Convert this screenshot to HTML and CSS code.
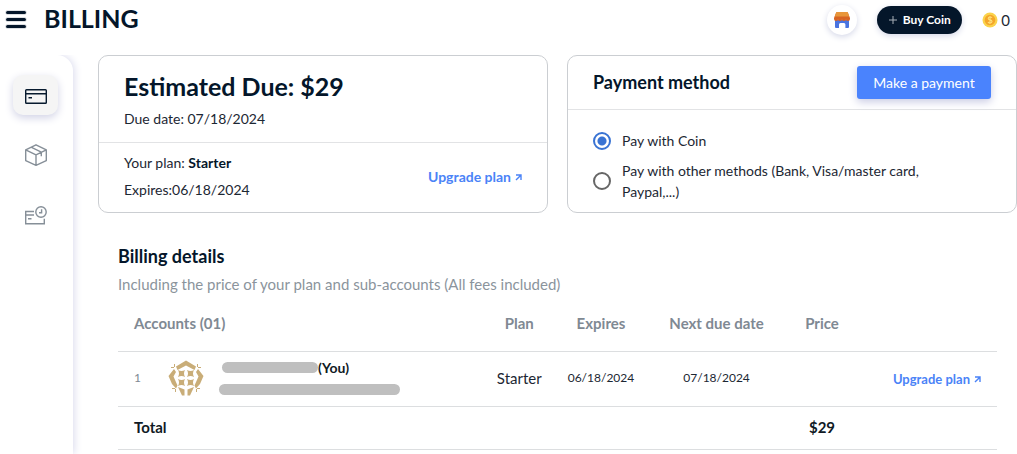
FILE: index.html
```html
<!DOCTYPE html>
<html lang="en">
<head>
<meta charset="utf-8">
<meta name="viewport" content="width=device-width, initial-scale=1">
<title>Billing</title>
<link rel="stylesheet" href="styles.css">
</head>
<body>
<header class="topbar">
  <button class="menu-btn" aria-label="Menu"><span></span><span></span><span></span></button>
  <h1 class="page-title">BILLING</h1>
  <div class="top-actions">
    <button class="shop-btn" aria-label="Shop">
      <svg width="16" height="17" viewBox="0 0 16 17">
        <path d="M1 8h14v7q0 1-1 1h-2.600v-3.500q0-1.500-1.400-1.500H6.500Q5 11 5 12.500V16H2q-1 0-1-1z" fill="#4a74e0"/>
        <path d="M2 1q.2-1 1.200-1h9.600q1 0 1.200 1l2 5v1q0 2-2 2t-2-1.500Q12 9 10 9T8 7.500Q8 9 6 9T4 7.500Q4 9 2 9T0 7V6z" fill="#d76424"/>
        <path d="M2 1q.2-1 1.200-1h9.600q1 0 1.200 1l1.300 3.500H.700z" fill="#e8963a"/>
      </svg>
    </button>
    <button class="buy-btn"><svg width="8" height="8" viewBox="0 0 8 8"><path d="M4 0v8M0 4h8" stroke="#a9b0b8"/></svg>Buy Coin</button>
    <div class="coins">
      <svg width="16" height="16" viewBox="0 0 16 16"><circle cx="8" cy="8" r="7.500" fill="#fbd34b"/><circle cx="8" cy="8" r="5.300" fill="#f4a62a"/><path d="M10 5.800Q9.500 5 8 5 6.200 5 6.200 6.400 6.200 7.600 8 7.900 10 8.300 10 9.600 10 11 8 11 6.400 11 6 10M8 3.900v8.200" fill="none" stroke="#ffe07a" stroke-width="1.100"/></svg>
      <span>0</span>
    </div>
  </div>
</header>
<div class="layout">
  <nav class="sidebar">
    <a href="#" class="nav-item active" aria-label="Payment">
      <svg width="22" height="15" viewBox="0 0 22 15" fill="none" stroke="#071a2e" stroke-width="1.400"><rect x=".7" y=".7" width="20.600" height="13.600" rx=".8"/><path d="M1 4.700h20M3.500 8.700h3.500"/></svg>
    </a>
    <a href="#" class="nav-item" aria-label="Products">
      <svg width="22" height="22" viewBox="0 0 22 22" fill="none" stroke="#868f98" stroke-width="1.400" stroke-linejoin="round"><path d="M11 .800 21.300 5.800v10.800L11 21.300.700 16.600V5.800zM.700 5.800 11 10.800 21.300 5.800M11 10.800v10.500M6 3.200l10.300 5v4"/></svg>
    </a>
    <a href="#" class="nav-item" aria-label="Payment history">
      <svg width="22" height="19" viewBox="0 0 22 19" fill="none" stroke="#868f98" stroke-width="1.400"><path d="M9 5.500H.700v12.300h18.600v-5M1 9h8M3 12.800h3.500"/><circle cx="16" cy="6" r="5.200"/><path d="M16.600 3.300v3.500H14"/></svg>
    </a>
  </nav>
  <main class="content">
    <div class="cards">
      <section class="card">
        <div class="due">
          <h2>Estimated Due: $29</h2>
          <p>Due date: 07/18/2024</p>
        </div>
        <div class="plan">
          <div>
            <p>Your plan: <strong>Starter</strong></p>
            <p>Expires:06/18/2024</p>
          </div>
          <a href="#" class="upgrade">Upgrade plan<svg width="7" height="7" viewBox="0 0 7 7"><path d="M1 6 5.800 1.200M1 1h5v5" fill="none" stroke="currentColor" stroke-width="1.400"/></svg></a>
        </div>
      </section>
      <section class="card">
        <div class="method-head">
          <h3>Payment method</h3>
          <button class="pay-btn">Make a payment</button>
        </div>
        <div class="methods">
          <label><input type="radio" name="method" checked><span>Pay with Coin</span></label>
          <label><input type="radio" name="method"><span>Pay with other methods (Bank, Visa/master card, Paypal,...)</span></label>
        </div>
      </section>
    </div>
    <section class="details">
      <h3>Billing details</h3>
      <p class="sub">Including the price of your plan and sub-accounts (All fees included)</p>
      <table class="bill">
        <colgroup><col class="c-account"><col class="c-plan"><col class="c-plan"><col class="c-next"><col class="c-price"><col></colgroup>
        <thead><tr><th class="first">Accounts (01)</th><th>Plan</th><th>Expires</th><th>Next due date</th><th>Price</th><th></th></tr></thead>
        <tbody>
          <tr class="account-row">
            <td class="first"><div class="account">
              <span class="num">1</span>
              <svg class="avatar" width="36" height="36" viewBox="0 0 36 36" fill="#c9ad78">
                <path d="M18 .500 28 6.500 26.500 10 18 5.500 9.500 10 8 6.500z"/>
                <path d="M6 9 8 12 5.500 16.500 9.500 25.500 8 28.500 4 24 .500 16z"/>
                <path d="M30 9 28 12 30.500 16.500 26.500 25.500 28 28.500 32 24 35.500 16z"/>
                <path d="M10 27 16.500 29.500V35.500H14z"/><path d="M26 27 19.500 29.500V35.500H22z"/>
                <path d="M3 7h3v1H3zM6 4h1v3H6zM30 7h3v1h-3zM29 4h1v3h-1zM4 28h3v1H4zM7 29h1v3H7zM29 28h3v1h-3zM28 29h1v3h-1z"/>
                <path d="M10 10q3.500 2 7 0-2 3.500 0 7-3.500-2-7 0 2-3.500 0-7zM19 10q3.500 2 7 0-2 3.500 0 7-3.500-2-7 0 2-3.500 0-7zM10 19q3.500 2 7 0-2 3.500 0 7-3.500-2-7 0 2-3.500 0-7zM19 19q3.500 2 7 0-2 3.500 0 7-3.500-2-7 0 2-3.500 0-7z"/>
              </svg>
              <div class="who">
                <div class="name"><span class="mask"></span>(You)</div>
                <div class="mask mask-mail"></div>
              </div>
            </div></td>
            <td>Starter</td><td class="date">06/18/2024</td><td class="date">07/18/2024</td><td></td>
            <td class="action"><a href="#" class="upgrade small">Upgrade plan<svg width="7" height="7" viewBox="0 0 7 7"><path d="M1 6 5.800 1.200M1 1h5v5" fill="none" stroke="currentColor" stroke-width="1.400"/></svg></a></td>
          </tr>
          <tr class="total"><td class="first">Total</td><td></td><td></td><td></td><td>$29</td><td></td></tr>
        </tbody>
      </table>
    </section>
  </main>
</div>
</body>
</html>
```
FILE: styles.css
```css
* { box-sizing: border-box; }
body {
  margin: 0;
  min-height: 100vh;
  display: flex;
  flex-direction: column;
  background: #fff;
  color: #1c2733;
  font: 14px/20px Lato, "Open Sans", sans-serif;
  overflow-x: hidden;
}
h1, h2, h3, p { margin: 0; }
h1, h2, h3 { color: #04162a; font-weight: 700; }
button { border: 0; padding: 0; font: inherit; cursor: pointer; }
a { color: #4a83f7; text-decoration: none; }
svg { display: block; flex: none; }

.topbar { height: 55px; display: flex; align-items: flex-start; padding: 0 7px 0 6px; }
.menu-btn { width: 20px; margin-top: 11px; background: none; display: grid; gap: 4px; }
.menu-btn span { height: 3px; border-radius: 2px; background: #04162a; outline: 1px solid #04162a22; }
.page-title { margin: 2px 0 0 18px; font-size: 25px; line-height: 32px; }
.top-actions { margin-left: auto; display: flex; align-items: center; height: 40px; }
.shop-btn {
  width: 30px; height: 30px; border-radius: 50%; background: #fff;
  display: grid; place-items: center; box-shadow: 0 2px 6px #d5d8e8;
}
.buy-btn {
  width: 85px; height: 28px; margin: 0 20px; border-radius: 14px;
  background: #04162a; color: #fff; font-size: 12px; font-weight: 700;
  display: flex; align-items: center; justify-content: center; gap: 6px;
  box-shadow: 0 2px 6px #d5d8e8;
}
.coins { display: flex; align-items: center; gap: 3px; font-size: 15px; }

.layout { flex: 1; display: flex; }
.sidebar {
  width: 73px; flex: none; padding: 20px 0 0 13px;
  border-radius: 0 16px 0 0; box-shadow: 1px 0 8px #d8d9ec;
  display: flex; flex-direction: column; gap: 20px;
  clip-path: inset(0 -12px 0 0);
}
.nav-item { width: 45px; height: 40px; display: grid; place-items: center; border-radius: 10px; }
.nav-item.active { background: #f5f5f5; box-shadow: 0 3px 8px #d2d3e6; padding-top: 2px; }

.content { flex: 1; min-width: 0; padding-left: 25px; }
.cards { display: grid; grid-template-columns: 1fr 1fr; gap: 19px; }
.card { border: 1px solid #cbced2; border-radius: 10px; }
.due { padding: 14px 25px 13px; border-bottom: 1px solid #e2e3e5; }
.due h2 { font-size: 25px; line-height: 32px; }
.due p { margin-top: 7px; }
.plan { display: flex; justify-content: space-between; align-items: center; padding: 10px 25px 12px; }
.plan p + p { margin-top: 7px; }
strong { color: #04162a; }
.upgrade { display: inline-flex; align-items: center; gap: 4px; font-weight: 700; }
.upgrade svg { margin-top: 2px; }
.upgrade.small { font-size: 13px; }

.method-head {
  display: flex; justify-content: space-between; align-items: center;
  padding: 10px 25px; border-bottom: 1px solid #e2e3e5;
}
.method-head h3, .details h3 { font-size: 18px; line-height: 24px; }
.method-head h3 { padding-bottom: 2px; }
.pay-btn {
  width: 134px; height: 33px; border-radius: 3px; background: #4a83fd;
  color: #fff; box-shadow: 0 3px 8px #c9cbe4;
}
.methods { padding: 20px 64px 10px 25px; display: grid; gap: 9px; }
.methods label { display: flex; align-items: center; gap: 11px; line-height: 21px; }
.methods input {
  appearance: none; flex: none; width: 18px; height: 18px; margin: 0;
  border: 2px solid #666; border-radius: 50%; background: #fff;
}
.methods input:checked { border-color: #3973d3; background: radial-gradient(circle, #3973d3 4px, #fff 5px); }

.details { padding: 31px 20px 0; }
.sub { margin-top: 6px; color: #8b949c; font-size: 15px; }
.bill { width: 100%; margin-top: 2px; table-layout: fixed; border-collapse: collapse; font-size: 15px; }
.c-account { width: 41%; }
.c-plan { width: 9.300%; }
.c-next { width: 17%; }
.c-price { width: 7%; }
.bill th, .bill td { padding: 0 0 1px; height: 55px; text-align: center; border-bottom: 1px solid #dcdee0; }
.bill th { color: #7f8993; font-weight: 700; }
.bill .first { text-align: left; padding-left: 16px; }
.bill .action { padding-right: 16px; text-align: right; }
.bill .date { font-size: 12px; }
.bill .total td { height: 43px; font-weight: 700; color: #101a24; }
.account { display: flex; align-items: center; }
.num { width: 34px; font-size: 12px; color: #7f8993; }
.who { margin-left: 15px; }
.name { display: flex; align-items: center; height: 22px; padding-left: 3px; font-size: 14px; font-weight: 700; color: #101a24; }
.mask { display: block; width: 96px; height: 11px; border-radius: 6px; background: #bfbfbf; }
.mask-mail { width: 181px; margin: 5px 0; }
```
